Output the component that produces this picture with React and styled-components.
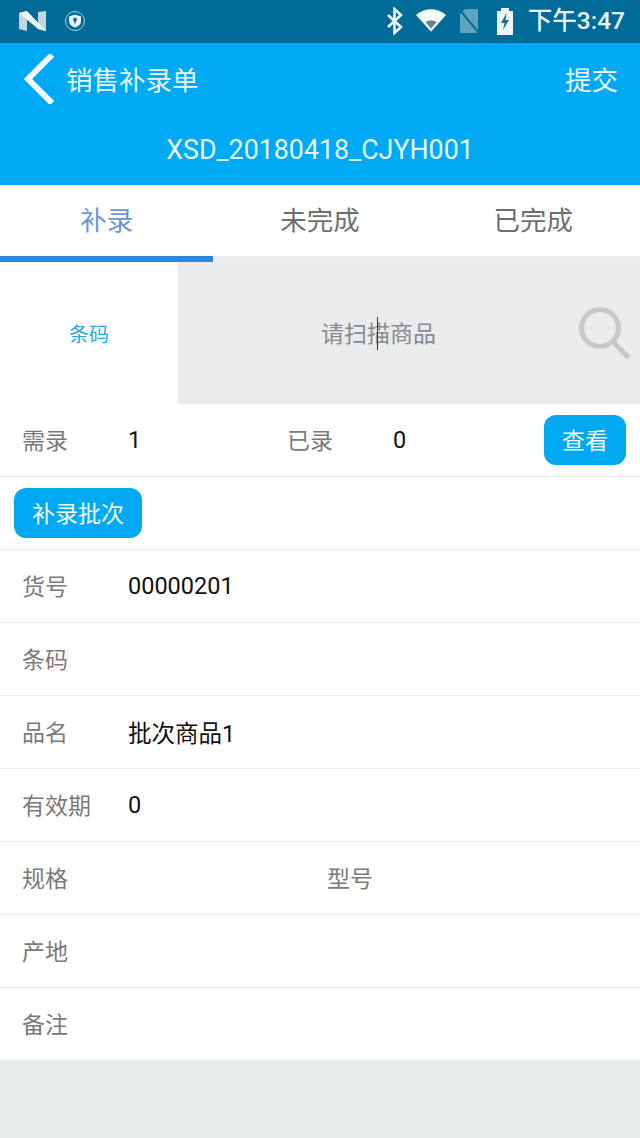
import React from 'react';
import styled, { createGlobalStyle } from 'styled-components';

const Global = createGlobalStyle`
  html, body { margin: 0; padding: 0; background: #e9eced; }
  body { font-family: Roboto, "Noto Sans CJK SC", sans-serif; }
  * { box-sizing: border-box; }
`;

const Page = styled.div`
  width: 640px;
  height: 1138px;
  overflow: hidden;
  background: #e9eced;
`;

const StatusBar = styled.div`
  height: 43px;
  background: #006b96;
  display: flex;
  align-items: center;
  padding: 0 15px 0 19px;
  color: #e8f3f7;
`;

const StatusLeft = styled.div`
  display: flex;
  align-items: center;
  gap: 18px;
  flex: 1;
  margin-top: -2px;
`;

const StatusRight = styled.div`
  display: flex;
  align-items: center;
  margin-top: -2px;
`;

const Clock = styled.span`
  font-size: 24.5px;
  font-weight: 500;
  margin-left: 13px;
  line-height: 42px;
`;

const Header = styled.div`
  height: 142px;
  background: #00a9f4;
  color: #e6f7fe;
`;

const NavRow = styled.div`
  height: 72px;
  display: flex;
  align-items: center;
  padding: 0 22px 0 24px;
`;

const BackIcon = styled.svg`
  width: 30px;
  height: 50px;
  margin-right: 12px;
  flex: none;
`;

const NavTitle = styled.div`
  font-size: 26.5px;
  flex: 1;
  margin-top: -1px;
`;

const Submit = styled.div`
  font-size: 26.5px;
  margin-top: -1px;
`;

const OrderNo = styled.div`
  text-align: center;
  font-size: 26.8px;
  line-height: 30px;
  margin-top: 20px;
`;

const Tabs = styled.div`
  display: flex;
  height: 77px;
  background: #fff;
`;

const Tab = styled.div`
  flex: 1;
  height: 77px;
  padding-bottom: 5px;
  display: flex;
  align-items: center;
  justify-content: center;
  font-size: 26.5px;
  color: ${p => (p.$active ? '#6f95cc' : '#6e6e6e')};
  border-bottom: 6px solid ${p => (p.$active ? '#2f86d2' : '#eceeef')};
`;

const SearchRow = styled.div`
  display: flex;
  height: 142px;
`;

const SearchLabel = styled.div`
  width: 178px;
  background: #fff;
  display: flex;
  align-items: center;
  justify-content: center;
  color: #2aa9dc;
  font-size: 20px;
`;

const SearchField = styled.div`
  flex: 1;
  position: relative;
  background: #e9ebed;
  display: flex;
  align-items: center;
  padding: 0 0 2px 143px;
  color: #8a8a8a;
  font-size: 23px;
`;

const Caret = styled.span`
  position: absolute;
  left: 199px;
  top: 55px;
  width: 1px;
  height: 33px;
  background: #333;
`;

const SearchIcon = styled.svg`
  position: absolute;
  right: 10px;
  top: 44px;
  width: 52px;
  height: 54px;
`;

const Row = styled.div`
  height: 73px;
  background: #fff;
  display: flex;
  align-items: center;
  padding-left: ${p => p.$pad || 22}px;
  border-bottom: 1px solid #eceeef;
  position: relative;
`;

const Label = styled.span`
  width: ${p => p.$w || 106}px;
  flex: none;
  font-size: 23px;
  color: #7a7a7a;
  margin-top: -3px;
`;

const Value = styled.span`
  font-size: 23.5px;
  color: #111;
  width: ${p => (p.$w ? `${p.$w}px` : 'auto')};
  flex: ${p => (p.$w ? 'none' : '0 1 auto')};
`;

const Pill = styled.div`
  background: #00a9f0;
  color: #f0faff;
  border-radius: 12px;
  font-size: 23px;
  display: flex;
  align-items: center;
  justify-content: center;
  width: ${p => p.$w}px;
  height: 50px;
  padding-bottom: 2px;
`;

const ViewButton = styled(Pill)`
  margin-left: auto;
  margin-right: 14px;
`;

const Battery = () => (
  <svg width="20" height="28" viewBox="0 0 20 28">
    <path d="M6 1h8v3h4v24H2V4h4z" fill="#eef6f9" />
    <path d="M11.5 6L6 16h3.5L8 23l6-10h-3.5z" fill="#1d6f92" />
  </svg>
);

const App = () => (
  <Page>
    <Global />
    <StatusBar>
      <StatusLeft>
        <svg width="27" height="22" viewBox="0 0 27 22">
          <path d="M0 3l8-2v20l-8-2z" fill="#c2d6de" />
          <path d="M19 2l8-1v20l-8-2z" fill="#c2d6de" />
          <path d="M0 3l8-2 19 20-8-2z" fill="#eef6f9" />
        </svg>
        <svg width="22" height="22" viewBox="0 0 22 22">
          <circle cx="11" cy="11" r="9.500" fill="none" stroke="#a9cfdd" strokeWidth="1" />
          <path d="M11 4.500l6 2v4.500c0 3.400-2.600 5.400-6 6.500-3.400-1.100-6-3.100-6-6.500V6.500z" fill="#e8f3f7" />
          <circle cx="11" cy="9.500" r="2" fill="#1d6f92" />
          <path d="M10.200 10h1.600v3.500h-1.600z" fill="#1d6f92" />
        </svg>
      </StatusLeft>
      <StatusRight>
        <svg width="18" height="28" viewBox="0 0 18 28" style={{ marginRight: 12 }}>
          <path d="M2 8l13 12-6.500 6V2L15 8 2 20" fill="none" stroke="#eef6f9" strokeWidth="2.600" />
        </svg>
        <svg width="30" height="23" viewBox="0 0 32 24" style={{ marginRight: 12 }}>
          <path d="M0 6C9-2 23-2 32 6L16 24z" fill="#f4f9fb" />
          <path d="M10 13.500c4-2 8-2 12 0l-6 7z" fill="#6d7f88" />
        </svg>
        <svg width="22" height="26" viewBox="0 0 22 26" style={{ marginRight: 15 }}>
          <path d="M7 1h13v24H2V6z" fill="#5ea3c0" />
          <path d="M1 1l20 24" stroke="#0f6a90" strokeWidth="2" />
        </svg>
        <Battery />
        <Clock>下午3:47</Clock>
      </StatusRight>
    </StatusBar>
    <Header>
      <NavRow>
        <BackIcon viewBox="0 0 30 50">
          <path d="M26 3L4 25l22 22" fill="none" stroke="#eefaff" strokeWidth="6" strokeLinecap="square" />
        </BackIcon>
        <NavTitle>销售补录单</NavTitle>
        <Submit>提交</Submit>
      </NavRow>
      <OrderNo>XSD_20180418_CJYH001</OrderNo>
    </Header>
    <Tabs>
      <Tab $active>补录</Tab>
      <Tab>未完成</Tab>
      <Tab>已完成</Tab>
    </Tabs>
    <SearchRow>
      <SearchLabel>条码</SearchLabel>
      <SearchField>
        请扫描商品
        <Caret />
        <SearchIcon viewBox="0 0 52 54">
          <circle cx="22" cy="22" r="18.500" fill="none" stroke="#c6c8ca" strokeWidth="5" />
          <path d="M36 37l13 13" stroke="#c6c8ca" strokeWidth="5" strokeLinecap="round" />
        </SearchIcon>
      </SearchField>
    </SearchRow>
    <Row>
      <Label>需录</Label>
      <Value $w={159}>1</Value>
      <Label>已录</Label>
      <Value>0</Value>
      <ViewButton $w={82}>查看</ViewButton>
    </Row>
    <Row $pad={14}>
      <Pill $w={128}>补录批次</Pill>
    </Row>
    <Row><Label>货号</Label><Value>00000201</Value></Row>
    <Row><Label>条码</Label></Row>
    <Row><Label>品名</Label><Value>批次商品1</Value></Row>
    <Row><Label>有效期</Label><Value>0</Value></Row>
    <Row><Label $w={305}>规格</Label><Label>型号</Label></Row>
    <Row><Label>产地</Label></Row>
    <Row><Label>备注</Label></Row>
  </Page>
);

export default App;
